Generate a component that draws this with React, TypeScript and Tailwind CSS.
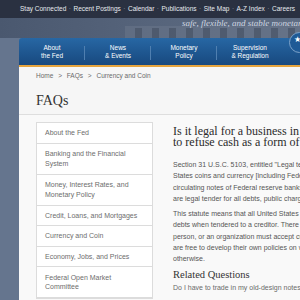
import React from "react";

const sans = { fontFamily: '"Liberation Sans", Arial, sans-serif' };
const serif = { fontFamily: '"Liberation Serif", "Times New Roman", serif' };

const topLinks = ["Stay Connected", "Recent Postings", "Calendar", "Publications", "Site Map", "A-Z Index", "Careers"];
const navItems = [
  ["About", "the Fed"],
  ["News", "& Events"],
  ["Monetary", "Policy"],
  ["Supervision", "& Regulation"],
];
const sideItems = [
  ["About the Fed"],
  ["Banking and the Financial", "System"],
  ["Money, Interest Rates, and", "Monetary Policy"],
  ["Credit, Loans, and Mortgages"],
  ["Currency and Coin"],
  ["Economy, Jobs, and Prices"],
  ["Federal Open Market", "Committee"],
];

export default function App() {
  return (
    <div className="w-[300px] h-[300px] overflow-hidden bg-[#65758e] relative" style={sans}>
      {/* top utility bar */}
      <div className="h-[18px] bg-[#2a3141] flex items-center pl-[20px] whitespace-nowrap text-[6.5px] text-[#e8ebf0]">
        {topLinks.map((l, i) => (
          <React.Fragment key={l}>
            {i > 0 && <span className="mx-[2.5px] text-[#8a93a3]">·</span>}
            <span>{l}</span>
          </React.Fragment>
        ))}
      </div>
      {/* banner */}
      <div className="h-[20px] relative bg-gradient-to-r from-[#4a586f] via-[#56647b] to-[#5f6d83] overflow-hidden">
        <svg className="absolute left-0 top-0" width="300" height="20" viewBox="0 0 300 20">
          <rect x="125" y="8" width="175" height="12" fill="#6b788c" opacity="0.5" />
          {[135, 152, 169, 186, 203, 220, 237, 254, 271, 288].map((x) => (
            <rect key={x} x={x} y="10" width="7" height="10" fill="#3f4a5c" opacity="0.55" />
          ))}
        </svg>
        <div
          className="absolute left-[182px] top-[-1px] whitespace-nowrap italic text-[9px] text-[#cfd6e0]"
          style={serif}
        >
          safe, flexible, and stable monetary
        </div>
      </div>
      {/* main */}
      <div className="flex">
        <div className="w-[19px] shrink-0" />
        <div className="w-[281px] shrink-0 relative">
          <div className="h-[27px] rounded-tl-[3px] bg-gradient-to-b from-[#2767a4] to-[#18497f] flex items-center text-white text-[6.5px] leading-[8px] text-center">
            {navItems.map(([a, b], i) => (
              <div key={a} className="w-[66px] h-[27px] flex items-center justify-center relative">
                <div>
                  <div>{a}</div>
                  <div>{b}</div>
                </div>
                {i < 3 && <div className="absolute right-0 top-[8px] h-[14px] w-px bg-[#4f7fb0]" />}
              </div>
            ))}
          </div>
          <div className="h-[2px] bg-[#e6a43e]" />
          <div className="absolute right-[-10px] top-[-6px] w-[21px] h-[21px] rounded-full bg-[#1f5a96] border border-[#7ea3c9] flex items-start justify-center pt-[3px] pr-[5px] text-white text-[8px] leading-none">
            ★
          </div>
          {/* content */}
          <div className="bg-[#f6f6f6] h-[240px]">
            <div className="pl-[17px] pt-[4px] text-[6.5px] text-[#6a6a6a] leading-[10px] whitespace-nowrap">
              Home <span className="mx-[3px]">&gt;</span> FAQs <span className="mx-[3px]">&gt;</span> Currency and Coin
            </div>
            <div className="pl-[17px] pt-[12px] pb-[5px] text-[14px] leading-[16px] text-[#333]" style={serif}>
              FAQs
            </div>
            <div className="h-px bg-[#dedede]" />
            <div className="flex pt-[7px] pl-[17px] bg-[#f9f9f9] h-[200px]">
              <div className="w-[117px] shrink-0 border border-[#dcdcdc] bg-white self-start">
                {sideItems.map((lines, i) => (
                  <div
                    key={i}
                    className={`px-[8px] ${lines.length > 1 ? "py-[5.5px]" : "py-[5px]"} border-b border-[#dcdcdc] text-[7px] leading-[9.5px] text-[#6d6d6d]`}
                  >
                    {lines.map((l) => (
                      <div key={l} className="whitespace-nowrap">{l}</div>
                    ))}
                  </div>
                ))}
              </div>
              <div className="w-[260px] shrink-0 pl-[20px] pt-[3.5px] whitespace-nowrap">
                <div className="text-[12px] leading-[11.5px] text-[#2b2b2b]" style={serif}>
                  Is it legal for a business in the United States
                  <br />
                  to refuse cash as a form of payment?
                </div>
                <div className="pt-[10.5px] text-[7px] leading-[11.3px] text-[#555]">
                  Section 31 U.S.C. 5103, entitled "Legal tender," states: "United
                  <br />
                  States coins and currency [including Federal reserve notes and
                  <br />
                  circulating notes of Federal reserve banks and national banks]
                  <br />
                  are legal tender for all debts, public charges, taxes, and dues."
                </div>
                <div className="pt-[4px] text-[7px] leading-[11.3px] text-[#555]">
                  This statute means that all United States money as identified above
                  <br />
                  debts when tendered to a creditor. There is, however, no Federal
                  <br />
                  person, or an organization must accept currency or coins as payment
                  <br />
                  are free to develop their own policies on whether or not to accept
                  <br />
                  otherwise.
                </div>
                <div className="pt-[3px] text-[10.5px] leading-[13px] text-[#333]" style={serif}>
                  Related Questions
                </div>
                <div className="pt-[2px] text-[7px] leading-[10px] text-[#6a6a6a]">
                  Do I have to trade in my old-design notes for the new ones?
                </div>
              </div>
            </div>
          </div>
        </div>
      </div>
    </div>
  );
}
